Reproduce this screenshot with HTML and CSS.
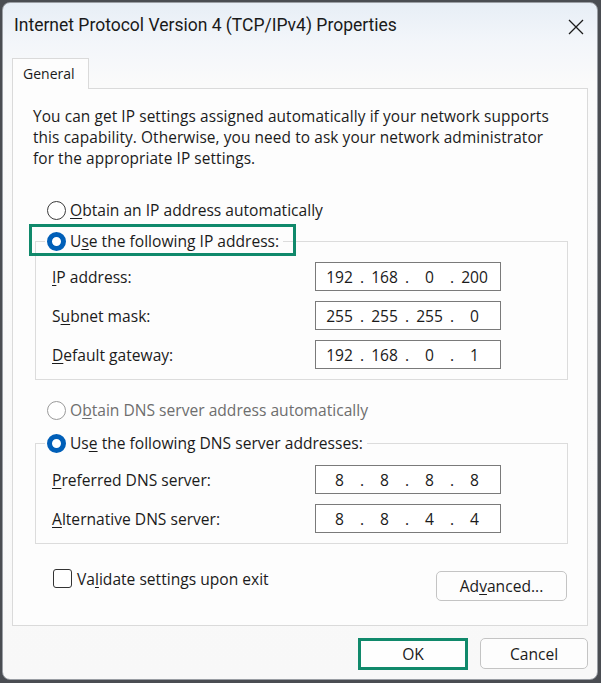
FILE: index.html
```html
<!DOCTYPE html>
<html>
<head>
<meta charset="utf-8">
<link rel="stylesheet" href="styles.css">
</head>
<body>
<div class="window">
  <div class="titlebar">
    <span class="title">Internet Protocol Version 4 (TCP/IPv4) Properties</span>
    <svg class="close" width="16" height="16" viewBox="0 0 16 16"><path d="M1 1 L15 15 M15 1 L1 15" stroke="#1c1c1c" stroke-width="1.3" fill="none"/></svg>
  </div>
  <div class="tabs"><div class="tab">General</div></div>
  <div class="panel">
    <div class="desc">
      <div class="line">You can get IP settings assigned automatically if your network supports</div>
      <div class="line">this capability. Otherwise, you need to ask your network administrator</div>
      <div class="line">for the appropriate IP settings.</div>
    </div>

    <div class="opt opt-ip"><span class="radio"></span><span><u>O</u>btain an IP address automatically</span></div>

    <fieldset class="group group-ip">
      <legend class="opt legend highlight"><span class="radio on"></span><span>U<u>s</u>e the following IP address:</span></legend>
      <div class="row"><span class="lbl"><u>I</u>P address:</span><div class="ip"><span>192</span><i>.</i><span>168</span><i>.</i><span>0</span><i>.</i><span>200</span></div></div>
      <div class="row"><span class="lbl">S<u>u</u>bnet mask:</span><div class="ip"><span>255</span><i>.</i><span>255</span><i>.</i><span>255</span><i>.</i><span>0</span></div></div>
      <div class="row"><span class="lbl"><u>D</u>efault gateway:</span><div class="ip"><span>192</span><i>.</i><span>168</span><i>.</i><span>0</span><i>.</i><span>1</span></div></div>
    </fieldset>

    <div class="opt opt-dns disabled"><span class="radio"></span><span>O<u>b</u>tain DNS server address automatically</span></div>

    <fieldset class="group group-dns">
      <legend class="opt legend"><span class="radio on"></span><span>Us<u>e</u> the following DNS server addresses:</span></legend>
      <div class="row"><span class="lbl"><u>P</u>referred DNS server:</span><div class="ip"><span>8</span><i>.</i><span>8</span><i>.</i><span>8</span><i>.</i><span>8</span></div></div>
      <div class="row"><span class="lbl"><u>A</u>lternative DNS server:</span><div class="ip"><span>8</span><i>.</i><span>8</span><i>.</i><span>4</span><i>.</i><span>4</span></div></div>
    </fieldset>

    <div class="footer">
      <div class="check-row"><span class="checkbox"></span><span>Va<u>l</u>idate settings upon exit</span></div>
      <button class="btn adv">Ad<u>v</u>anced...</button>
    </div>
  </div>
  <div class="actions">
    <button class="btn ok">OK</button>
    <button class="btn cancel">Cancel</button>
  </div>
</div>
</body>
</html>
```
FILE: styles.css
```css
* { box-sizing: border-box; }
html, body { margin: 0; padding: 0; }
body {
  width: 601px;
  height: 683px;
  background: #4a4d52;
  font-family: "Open Sans", "Noto Sans", sans-serif;
  color: #1b1b1b;
  padding: 2px 3px 3px 2px;
  overflow: hidden;
}
.window {
  width: 596px;
  height: 678px;
  border-radius: 8px;
  border: 1px solid #9a9ea4;
  background: linear-gradient(180deg, #e7eef6 0px, #f3f6fa 40px, #fafafa 80px, #f8f8f8 100%);
  display: flex;
  flex-direction: column;
  overflow: hidden;
}
.titlebar {
  height: 55px;
  display: flex;
  align-items: flex-start;
  justify-content: space-between;
  padding: 11px 13px 0 11px;
}
.title {
  font-family: Roboto, "Open Sans", sans-serif;
  font-size: 17.5px;
  line-height: 22px;
  color: #1a1a1a;
}
.close { margin-top: 5px; }
.tabs {
  padding-left: 9px;
  display: flex;
  position: relative;
  z-index: 2;
  margin-bottom: -1px;
}
.tab {
  width: 77px;
  height: 31px;
  border: 1px solid #dadada;
  border-bottom: none;
  background: #fdfdfd;
  font-size: 14px;
  padding: 5px 0 0 10px;
}
.panel {
  margin: 0 9px 0 9px;
  height: 538px;
  border: 1px solid #dadada;
  background: #fdfdfd;
  padding: 16.5px 0 0 0;
  font-size: 15.6px;
}
.desc {
  margin: 0 0 0 20px;
  font-size: 15.4px;
  letter-spacing: 0.1px;
  white-space: nowrap;
}
.line { height: 21px; line-height: 21px; }
u { text-decoration: underline; text-underline-offset: 2px; text-decoration-thickness: 1px; }
.opt {
  display: flex;
  align-items: center;
  gap: 4px;
  height: 20px;
  line-height: 20px;
  font-size: 15.6px;
  white-space: nowrap;
}
.opt-ip { margin: 31.5px 0 0 34px; }
.opt-dns { margin: 20px 0 0 34px; }
.disabled { color: #6e6e6e; }
.radio {
  width: 19px;
  height: 19px;
  border-radius: 50%;
  border: 1px solid #3a3a3a;
  background: #fff;
  flex: none;
}
.disabled .radio { border-color: #9a9a9a; }
.radio.on {
  border: 5.5px solid #005fb8;
  background: #fff;
}
.group {
  margin: 11px 19px 0 22px;
  border: 1px solid #dcdcdc;
  padding: 11px 16px 10px 16px;
  min-width: 0;
}
.group-dns { margin-top: 13px; padding-top: 12px; }
.legend {
  margin-left: -7px;
  padding: 0 4px 0 2px;
  position: relative;
}
.highlight::after {
  content: "";
  position: absolute;
  left: -16px;
  top: -7px;
  right: -13px;
  bottom: -5px;
  border: 3px solid #10896b;
}
.row {
  display: grid;
  grid-template-columns: 263px 186px;
  align-items: center;
  height: 29px;
  margin-top: 10px;
}
.row:first-of-type { margin-top: 0; }
.lbl { font-size: 15.6px; white-space: nowrap; }
.ip {
  height: 29px;
  border: 1px solid #7a7a7a;
  background: #fff;
  display: flex;
  align-items: center;
  padding-left: 5px;
  font-size: 15.6px;
}
.ip span { width: 37px; text-align: center; }
.ip i { width: 8px; text-align: center; font-style: normal; }
.footer {
  display: flex;
  justify-content: space-between;
  align-items: flex-start;
  margin: 25px 20px 0 40px;
}
.check-row {
  display: flex;
  align-items: center;
  gap: 5px;
  height: 19px;
  font-size: 15.6px;
}
.checkbox {
  width: 19px;
  height: 19px;
  border: 1px solid #333;
  border-radius: 3px;
  background: #fff;
}
.btn {
  font-family: inherit;
  font-size: 15.6px;
  color: #1b1b1b;
  background: #fdfdfd;
  border: 1px solid #c4c4c4;
  border-radius: 5px;
  padding: 0;
}
.adv { width: 131px; height: 30px; margin-top: 2px; }
.actions {
  display: flex;
  justify-content: flex-end;
  gap: 12px;
  padding: 12px 9px 0 0;
}
.ok {
  width: 110px;
  height: 32px;
  border: 3px solid #10896b;
  border-radius: 0;
  background: #fefefe;
}
.cancel { width: 108px; height: 31px; }
```
